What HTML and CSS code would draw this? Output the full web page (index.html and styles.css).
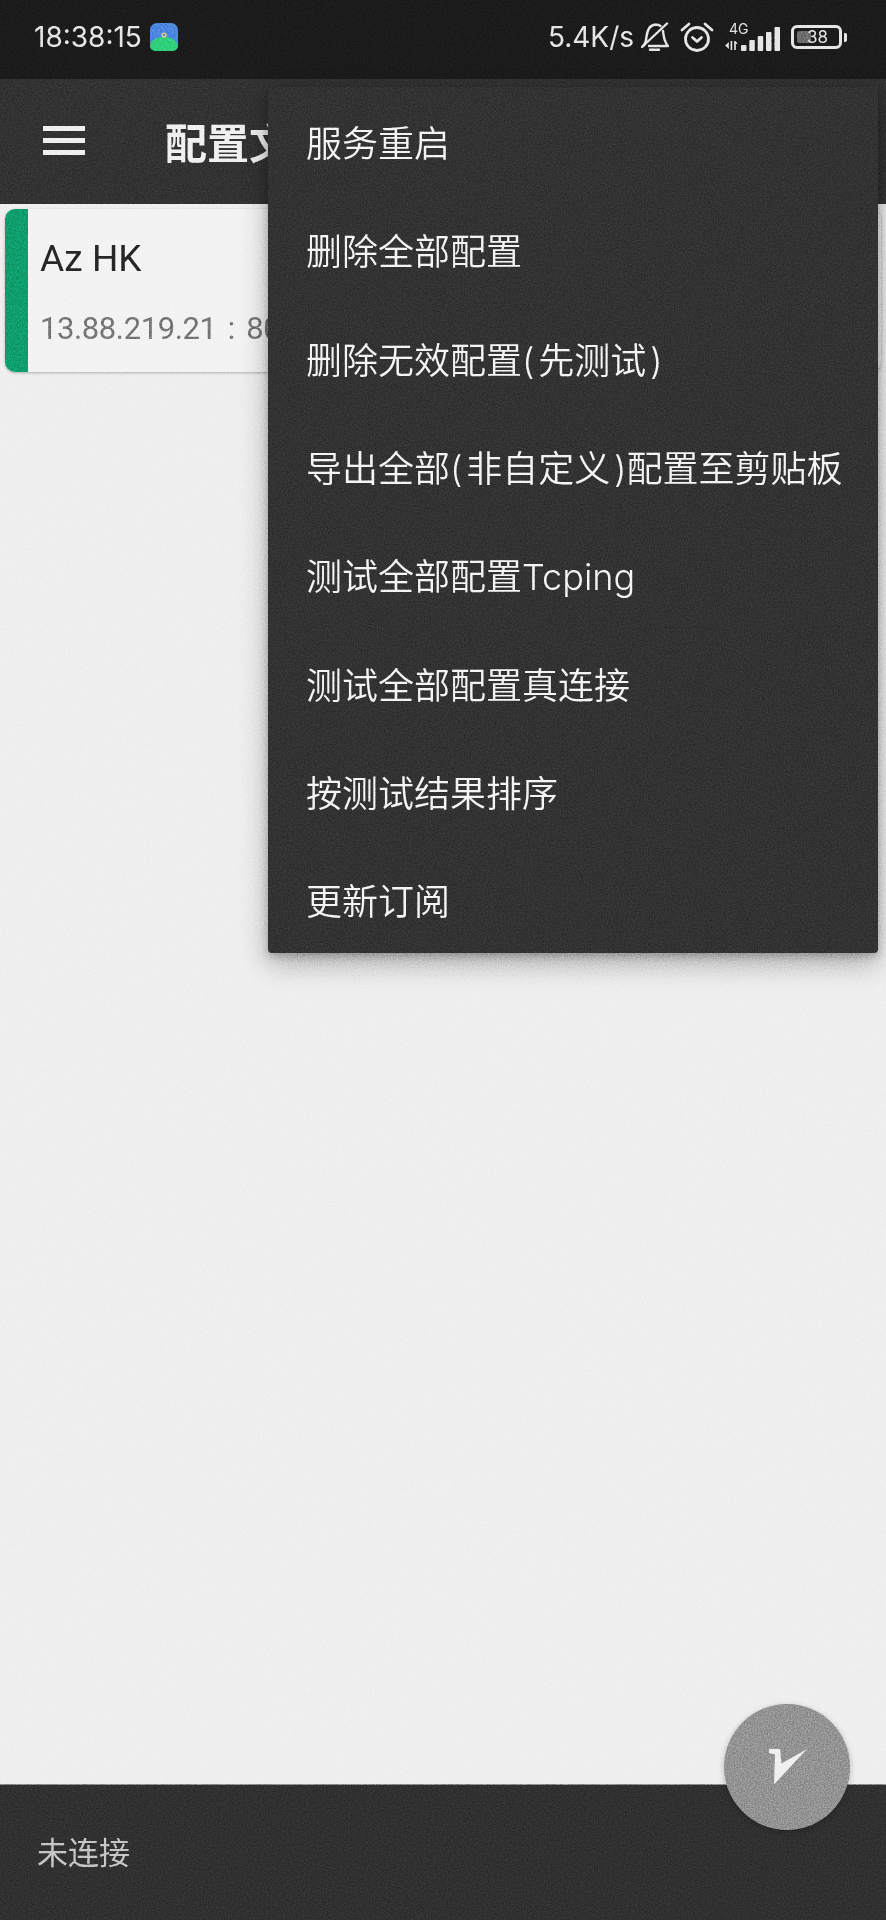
FILE: index.html
```html
<!DOCTYPE html>
<html lang="zh">
<head>
<meta charset="utf-8">
<title>v2rayNG</title>
<link rel="stylesheet" href="styles.css">
</head>
<body>
<div class="screen">
  <header class="status">
    <div class="status-left">
      <span class="clock">18:38:15</span>
      <svg class="app-icon" viewBox="0 0 28 28"><rect width="28" height="28" rx="7" fill="#4c86e0"/><path d="M0 23c1-6 7-9 14-9s13 3 14 9c0 3-3 5-6 5H6c-3 0-6-2-6-5z" fill="#2fd07a"/><circle cx="14" cy="12" r="2.600" fill="#d8cfa0"/><circle cx="14" cy="12" r="1" fill="#54617a"/></svg>
    </div>
    <div class="status-right">
      <span class="speed">5.4K/s</span>
      <svg class="ic-bell" viewBox="0 0 28 30" fill="none" stroke="#e6e6e6" stroke-width="2.400" stroke-linecap="round" stroke-linejoin="round"><path d="M2 24c2.500-2 3-5 3.500-9C6.200 8 9 3 14.500 2.500c2 0 3.500 .5 5 1.500"/><path d="M22 9c.8 6 1 11 5 15H8"/><path d="M1 25 26 1.500"/><path d="M9 27.800h9"/></svg>
      <svg class="ic-alarm" viewBox="0 0 34 30" fill="none" stroke="#e6e6e6" stroke-width="2.800" stroke-linecap="round" stroke-linejoin="round"><circle cx="17" cy="17" r="11.500"/><path d="M12.500 15.500 17 19.500l4.500-4"/><path d="M2 8 9 2M32 8l-7-6"/></svg>
      <div class="net">
        <span class="net-label">4G</span>
        <svg class="net-arrows" viewBox="0 0 14 10"><path d="M0 5 4 1v8zM6 0h1.800v10H6zM10 0h1.800v10H10zM11.500 0l2.500 3h-2.500z" fill="#e6e6e6"/></svg>
      </div>
      <svg class="ic-signal" viewBox="0 0 39 24"><g fill="#e6e6e6"><rect x="0" y="18" width="5.500" height="6" rx="1"/><rect x="8.300" y="13" width="5.500" height="11" rx="1"/><rect x="16.700" y="9" width="5.500" height="15" rx="1"/><rect x="25" y="5" width="5.500" height="19" rx="1"/><rect x="33.500" y="0" width="5.500" height="24" rx="1"/></g></svg>
      <div class="battery">
        <div class="battery-body"><div class="battery-fill"></div><span class="battery-num">38</span></div>
        <div class="battery-cap"></div>
      </div>
    </div>
  </header>

  <div class="appbar">
    <div class="hamburger"><span></span><span></span><span></span></div>
    <h1 class="title">配置文件</h1>
  </div>

  <main class="content">
    <article class="card">
      <div class="card-bar"></div>
      <div class="card-body">
        <div class="card-name">Az HK</div>
        <div class="card-addr">13.88.219.21 : 8080</div>
      </div>
    </article>
  </main>

  <footer class="bottom">
    <span class="conn">未连接</span>
  </footer>

  <button class="fab" type="button" aria-label="connect">
    <svg viewBox="0 0 38 36"><path d="M0 0h11l1.500 14.500L38 0 5 35.500 6 5.500 0 4z" fill="#efefef"/></svg>
  </button>

  <nav class="menu">
    <div class="menu-item">服务重启</div>
    <div class="menu-item">删除全部配置</div>
    <div class="menu-item"><span>删除无效配置<span class="po">(</span>先测试<span class="pc">)</span></span></div>
    <div class="menu-item"><span>导出全部<span class="po">(</span>非自定义<span class="pc">)</span>配置至剪贴板</span></div>
    <div class="menu-item">测试全部配置Tcping</div>
    <div class="menu-item">测试全部配置真连接</div>
    <div class="menu-item">按测试结果排序</div>
    <div class="menu-item">更新订阅</div>
  </nav>

  <svg class="grain" aria-hidden="true">
    <filter id="grain-noise" color-interpolation-filters="sRGB" x="0" y="0" width="100%" height="100%">
      <feTurbulence type="fractalNoise" baseFrequency="0.7" numOctaves="2" seed="4"/>
      <feColorMatrix type="matrix" values="1.800 0 0 0 -0.400  1.800 0 0 0 -0.400  1.800 0 0 0 -0.400  0 0 0 0 1"/>
    </filter>
    <rect width="100%" height="100%" filter="url(#grain-noise)"/>
  </svg>
</div>
</body>
</html>
```
FILE: styles.css
```css
* { box-sizing: border-box; }
html, body { margin: 0; padding: 0; }
body {
  background: #efefef;
  font-family: "Roboto", "Noto Sans CJK SC", sans-serif;
}
.screen {
  position: relative;
  width: 886px;
  height: 1920px;
  overflow: hidden;
  display: flex;
  flex-direction: column;
}
.grain {
  position: absolute;
  left: 0;
  top: 0;
  width: 886px;
  height: 1920px;
  pointer-events: none;
  mix-blend-mode: overlay;
  opacity: 0.22;
}
.status {
  height: 79px;
  flex: none;
  background: #1b1b1b;
  color: #e6e6e6;
  display: flex;
  justify-content: space-between;
  align-items: flex-start;
  padding: 22px 0 0 34px;
}
.status-left { display: flex; align-items: center; gap: 8px; }
.clock { font-size: 28px; line-height: 30px; font-family: "Inter", sans-serif; font-weight: 400; }
.app-icon { width: 28px; height: 28px; display: block; }
.status-right {
  display: flex;
  align-items: center;
  height: 30px;
  padding-right: 39px;
}
.speed { font-size: 28px; line-height: 30px; font-family: "Inter", sans-serif; white-space: nowrap; }
.ic-bell { width: 28px; height: 30px; margin-left: 7px; flex: none; }
.ic-alarm { width: 34px; height: 30px; margin-left: 11px; flex: none; }
.net { width: 25px; margin-left: 11px; display: flex; flex-direction: column; align-items: flex-start; height: 30px; flex: none; }
.net-label { font-size: 14px; line-height: 14px; height: 14px; margin-left: 4px; font-family: "Inter", sans-serif; }
.net-arrows { width: 13px; height: 9px; margin-top: 5px; }
.ic-signal { width: 39px; height: 24px; margin-left: -9px; margin-top: 4px; flex: none; }
.battery { display: flex; align-items: center; margin-left: 11px; flex: none; }
.battery-body {
  position: relative;
  width: 51px;
  height: 24px;
  border: 3px solid #e6e6e6;
  border-radius: 6px;
  padding: 3px;
}
.battery-fill { width: 14px; height: 100%; background: #6c6c6c; border-radius: 2px; }
.battery-num {
  position: absolute;
  left: 0;
  right: 0;
  top: -1px;
  text-align: center;
  font-size: 17px;
  line-height: 20px;
  color: #e6e6e6;
  font-family: "Inter", sans-serif;
  padding-left: 2px;
}
.battery-cap { width: 3px; height: 9px; background: #e6e6e6; border-radius: 0 2px 2px 0; margin-left: 2px; }

.appbar {
  height: 125px;
  flex: none;
  background: #323232;
  display: flex;
  align-items: center;
  padding-left: 43px;
}
.hamburger { width: 42px; display: flex; flex-direction: column; gap: 7px; margin-top: -2px; }
.hamburger span { display: block; height: 5px; background: #f0f0f0; }
.title {
  margin: -2px 0 0 80px;
  font-size: 42px;
  line-height: 50px;
  font-weight: 700;
  color: #f0f0f0;
  font-family: "Noto Sans CJK SC", sans-serif;
}

.content { flex: 1; background: #efefef; padding: 5px 5px 0; }
.card {
  display: flex;
  height: 163px;
  background: #f3f3f3;
  border-radius: 10px;
  overflow: hidden;
  box-shadow: 0 1px 3px rgba(0, 0, 0, 0.28);
}
.card-bar { width: 23px; background: #0e9e6c; flex: none; }
.card-body { padding-left: 12px; }
.card-name { font-size: 37px; line-height: 44px; margin-top: 28px; color: #262626; white-space: nowrap; }
.card-addr { font-size: 31px; line-height: 40px; letter-spacing: -0.4px; word-spacing: 4px; margin-top: 28px; color: #757575; white-space: nowrap; }

.bottom {
  height: 136px;
  flex: none;
  background: #303030;
  border-top: 1px solid #8d8d8d;
  display: flex;
  align-items: center;
  padding-left: 37px;
}
.conn { font-size: 31px; line-height: 40px; color: #c6c6c6; font-family: "Noto Sans CJK SC", sans-serif; font-weight: 400; margin-top: -3px; }

.fab {
  position: absolute;
  left: 724px;
  top: 1704px;
  width: 126px;
  height: 126px;
  padding: 0;
  border: 0;
  border-radius: 50%;
  background: #939393;
  box-shadow: 0 2px 6px rgba(0, 0, 0, 0.25);
  display: flex;
  align-items: center;
  justify-content: center;
}
.fab svg { width: 38px; height: 36px; display: block; margin-left: 2px; }

.menu {
  position: absolute;
  left: 268px;
  top: 87px;
  width: 610px;
  height: 866px;
  padding: 0;
  background: #323232;
  border-radius: 4px;
  box-shadow: 0 10px 28px rgba(0, 0, 0, 0.3), 0 3px 8px rgba(0, 0, 0, 0.22);
}
.menu-item {
  height: 108.300px;
  display: flex;
  align-items: center;
  padding-left: 38px;
  font-size: 36px;
  color: #f4f4f4;
  white-space: nowrap;
  font-family: "Inter", "Noto Sans CJK SC", sans-serif;
  font-weight: 350;
}
.po { margin-right: 3.700px; }
.pc { margin-left: 3.700px; }
```
